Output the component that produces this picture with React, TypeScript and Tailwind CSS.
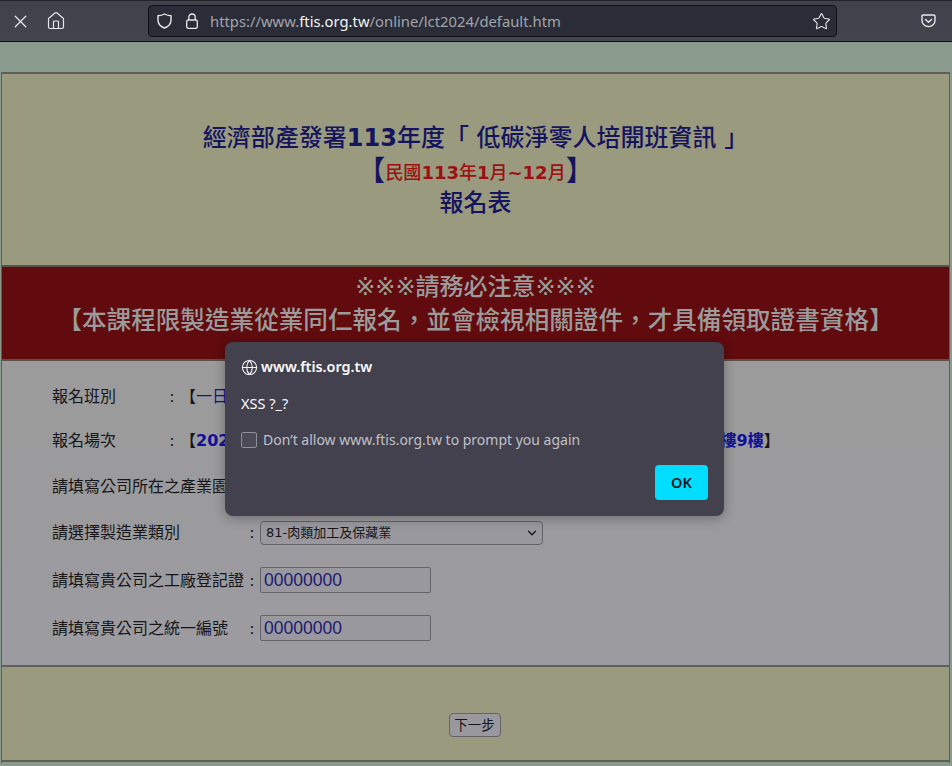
import type { ReactNode } from 'react';
import { ChevronDown, Globe, House, Star, X } from 'lucide-react';

const uiFont = "font-['Noto_Sans','Noto_Sans_CJK_TC',sans-serif]";
const pageFont = "font-['DejaVu_Sans','Noto_Sans_CJK_TC',sans-serif]";

// --- Browser toolbar
const Toolbar = () => (
  <div className="h-[42px] flex items-center bg-gradient-to-b from-[#3f414b] to-[#42444e] border-t border-t-[#22242b] border-b border-b-[#0f1014]">
    <X className="ml-[10px] shrink-0 text-[#e8e8ea]" size={21} strokeWidth={1.5} />
    <House className="ml-[15px] shrink-0 text-[#e8e8ea]" size={20} strokeWidth={1.4} />
    <div className="ml-[82px] w-[689px] h-[32px] flex items-center rounded-[4px] bg-[#2a2c37] border border-[#101116]">
      <svg className="ml-[8px]" width="15" height="16" viewBox="0 0 15 16" fill="none" stroke="#e8e8ea" strokeWidth="1.4">
        <path d="M7.500 1C5.500 2.200 3.300 2.700 1 2.800v4.400c0 3.500 2.400 6.200 6.500 7.800 4.100-1.600 6.500-4.300 6.500-7.800V2.800C11.700 2.700 9.500 2.200 7.500 1Z" />
      </svg>
      <svg className="ml-[14px]" width="12" height="16" viewBox="0 0 12 16" fill="none" stroke="#e8e8ea" strokeWidth="1.3">
        <path d="M2.800 7V4.200a3.200 3.200 0 0 1 6.400 0V7" />
        <rect x="0.700" y="7" width="10.600" height="8.300" rx="1.600" />
      </svg>
      <span className={`ml-[12px] text-[14.8px] text-[#a3a4aa] ${uiFont}`}>
        https://www.<span className="text-[#f4f4f6]">ftis.org.tw</span>/online/lct2024/default.htm
      </span>
      <Star className="ml-auto mr-[5px] text-[#e8e8ea]" size={19} strokeWidth={1.4} />
    </div>
    <svg className="ml-[84px]" width="15" height="14" viewBox="0 0 15 14" fill="none" stroke="#e8e8ea" strokeWidth="1.4">
      <path d="M2.200 1h10.600c.7 0 1.200.5 1.200 1.200v4.300c0 3.400-2.900 6.100-6.500 6.100S1 9.900 1 6.500V2.200C1 1.500 1.500 1 2.200 1Z" />
      <path d="m4.500 5.500 3 2.700 3-2.700" strokeLinecap="round" strokeLinejoin="round" />
    </svg>
  </div>
);

// short = the two top rows, where the colon sits closer to the label
const FormRow = ({ label, short, children }: { label: string; short?: boolean; children?: ReactNode }) => (
  <div className="flex items-center h-[24px] text-[16px] text-[#16161a]">
    <span className={short ? 'w-[112px] pt-[2px] whitespace-nowrap' : 'w-[192px] pt-[2px] whitespace-nowrap'}>{label}</span>
    <span className="w-[16px] pt-[2px] text-center">:</span>
    {children}
  </div>
);

const TextBox = () => (
  <input
    readOnly
    value="00000000"
    className="w-[171px] h-[26px] px-[3px] border border-[#63636a] rounded-[2px] bg-[#98989e] text-[17.500px] text-[#1c1a70] outline-none font-['Liberation_Sans',sans-serif]"
  />
);

// --- Alert dialog shown over the page
const PromptDialog = () => (
  <div className={`absolute left-[225px] top-[342px] w-[499px] h-[174px] rounded-[8px] bg-[#42414d] shadow-[0_2px_12px_rgba(0,0,0,0.3)] ${uiFont}`}>
    <div className="ml-[16px] mt-[16px] h-[18px] flex items-center gap-[3px] text-[#fbfbfe]">
      <Globe size={17} strokeWidth={1.5} />
      <span className="text-[14.400px] font-semibold">www.ftis.org.tw</span>
    </div>
    <div className="ml-[16px] mt-[17px] text-[14.500px] leading-[20px] text-[#fbfbfe]">XSS ?_?</div>
    <label className="ml-[16px] mt-[17px] flex items-center gap-[6px]">
      <span className="w-[16px] h-[16px] rounded-[2px] border border-[#8f8f9d] bg-[#4b4a56]" />
      <span className="text-[14px] leading-[20px] text-[#c0c0c8]">Don’t allow www.ftis.org.tw to prompt you again</span>
    </label>
    <div className="mt-[15px] mr-[16px] flex justify-end">
      <button className="w-[53px] h-[35px] rounded-[4px] bg-[#00ddff] text-[14.500px] font-semibold text-[#15141a]">OK</button>
    </div>
  </div>
);

export default function App() {
  return (
    <div lang="zh-TW" className="relative w-[952px] h-[766px] overflow-hidden bg-[#8a9a8c] [text-spacing-trim:space-all]">
      <Toolbar />

      <div className={`mt-[30px] ml-[1px] w-[949px] h-[691px] flex flex-col border-x border-t-2 border-[#5c5f5c] ${pageFont}`}>
        {/* header */}
        <div className="h-[191px] shrink-0 pt-[47px] flex flex-col items-center bg-[#9a9a7e] text-[#14145f] font-medium">
          <div className="text-[24px] leading-[34px] whitespace-nowrap">
            經濟部產發署<span className="font-bold">113</span>年度「 低碳淨零人培開班資訊 」
          </div>
          <div className="h-[34px] flex items-center whitespace-nowrap">
            <span className="text-[28px]">【</span>
            <span className="text-[18px] text-[#9c1012]">
              民國<span className="font-bold">113</span>年<span className="font-bold">1</span>月<span className="font-bold">~12</span>月
            </span>
            <span className="text-[28px]">】</span>
          </div>
          <div className="text-[24px] leading-[32px] -mt-[2px]">報名表</div>
        </div>

        {/* notice */}
        <div className="h-[96px] shrink-0 pt-[4px] flex flex-col items-center border-y-2 border-[#5c5048] bg-[#610b0e] text-[#9b9b9b] text-[24px] font-medium">
          <div className="leading-[33px]">
            <span className="font-normal">※※※</span>請務必注意<span className="font-normal">※※※</span>
          </div>
          <div className="leading-[33px] whitespace-nowrap text-[24.600px]">【本課程限製造業從業同仁報名，並會檢視相關證件，才具備領取證書資格】</div>
        </div>

        {/* form */}
        <div className="h-[304px] shrink-0 pl-[50px] pt-[23px] flex flex-col bg-gradient-to-b from-[#9b9b9b] to-[#9b9ba1]">
          <FormRow label="報名班別" short>
            <span className="pt-[2px] whitespace-nowrap">【<span className="text-[#10109c]">一日班</span>】</span>
          </FormRow>
          <div className="mt-[20px]">
            <FormRow label="報名場次" short>
              <span className="pt-[2px] whitespace-nowrap font-bold">
                【<span className="text-[#10109c]">2024</span>
                <span className="ml-[480px] text-[#10109c]">樓9樓</span>】
              </span>
            </FormRow>
          </div>
          <div className="mt-[22px]">
            <FormRow label="請填寫公司所在之產業園區" />
          </div>
          <div className="mt-[22px]">
            <FormRow label="請選擇製造業類別">
              <div className="relative mt-[2px]">
                <select className="block w-[283px] h-[24px] pl-[5px] appearance-none border border-[#63636a] rounded-[4px] bg-[#98989e] text-[13px] text-[#16161a] outline-none">
                  <option>81-肉類加工及保藏業</option>
                </select>
                <ChevronDown className="absolute right-[4px] top-[5px] text-[#16161a] pointer-events-none" size={14} strokeWidth={2.2} />
              </div>
            </FormRow>
          </div>
          <div className="mt-[24px]">
            <FormRow label="請填寫貴公司之工廠登記證">
              <TextBox />
            </FormRow>
          </div>
          <div className="mt-[24px]">
            <FormRow label="請填寫貴公司之統一編號">
              <TextBox />
            </FormRow>
          </div>
        </div>

        {/* footer */}
        <div className="h-[97px] shrink-0 pt-[46px] pr-[2px] flex justify-center items-start border-t-2 border-b-2 border-[#5c5f5c] bg-[#9a9a7e]">
          <button className="w-[52px] h-[24px] border border-[#63636a] rounded-[4px] bg-[#98989e] text-[13.500px] text-[#16161a]">下一步</button>
        </div>
      </div>

      <PromptDialog />
    </div>
  );
}
